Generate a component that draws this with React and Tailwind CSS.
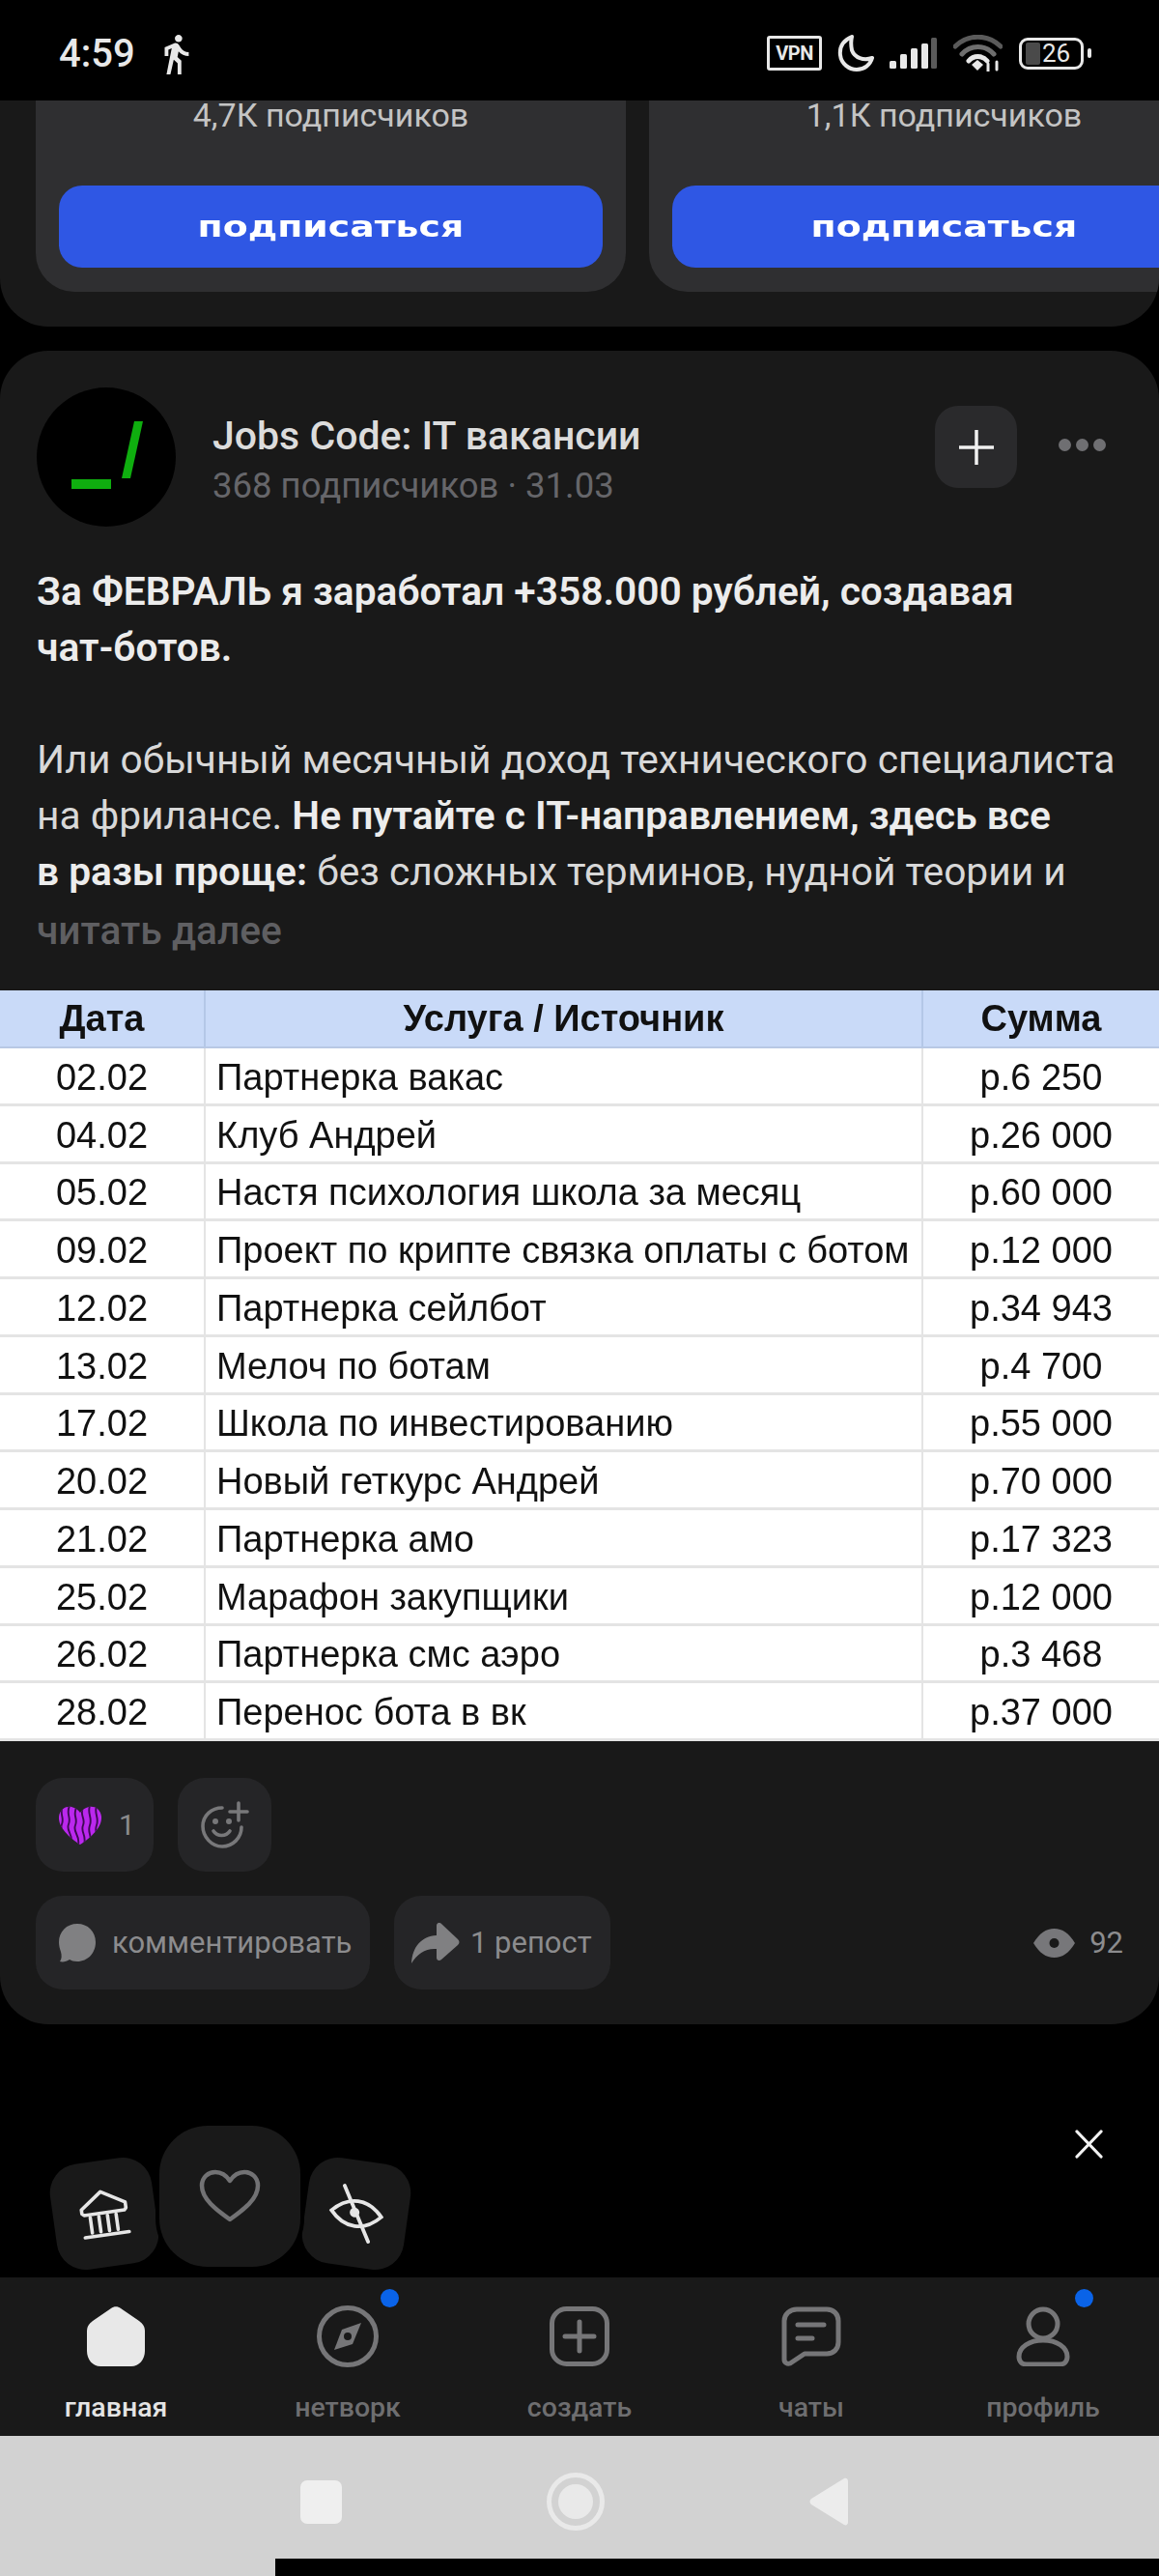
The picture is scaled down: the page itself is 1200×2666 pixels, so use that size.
import React from "react";
import { MdDirectionsWalk } from "react-icons/md";

const rows = [
  ["02.02", "Партнерка вакас", "р.6 250"],
  ["04.02", "Клуб Андрей", "р.26 000"],
  ["05.02", "Настя психология школа за месяц", "р.60 000"],
  ["09.02", "Проект по крипте связка оплаты с ботом", "р.12 000"],
  ["12.02", "Партнерка сейлбот", "р.34 943"],
  ["13.02", "Мелоч по ботам", "р.4 700"],
  ["17.02", "Школа по инвестированию", "р.55 000"],
  ["20.02", "Новый геткурс Андрей", "р.70 000"],
  ["21.02", "Партнерка амо", "р.17 323"],
  ["25.02", "Марафон закупщики", "р.12 000"],
  ["26.02", "Партнерка смс аэро", "р.3 468"],
  ["28.02", "Перенос бота в вк", "р.37 000"],
];

function StatusBar() {
  return (
    <div className="relative z-10 h-[104px] shrink-0 bg-black pt-[8px] pl-[61px] pr-[70px] flex items-center justify-between text-[#e8e8e8]">
      <div className="flex items-center">
        <span className="text-[40px] font-medium leading-[48px]">4:59</span>
        <MdDirectionsWalk className="w-[46px] h-[46px] ml-[19px]" />
      </div>
      <div className="flex items-center gap-[16px] -mt-[2px]">
        <div className="w-[57px] h-[36px] border-[3px] border-[#e8e8e8] rounded-[3px] flex items-center justify-center text-[20px] font-bold leading-[24px] tracking-tight">VPN</div>
        <svg width="38" height="38" viewBox="0 0 38 38" fill="none" stroke="#e8e8e8" strokeWidth="4" strokeLinejoin="round">
          <path d="M15 2C6 6 2 13 3 21c1 9 9 15 17 15 8 0 14-5 16-12-9 3-18 0-21-8-1-5-1-10 0-14z" />
        </svg>
        <svg width="50" height="32" viewBox="0 0 50 32">
          <rect x="0" y="24" width="7" height="8" rx="1.5" fill="#e8e8e8" />
          <rect x="11" y="17" width="7" height="15" rx="1.5" fill="#e8e8e8" />
          <rect x="22" y="11" width="7" height="21" rx="1.5" fill="#e8e8e8" />
          <rect x="33" y="6" width="7" height="26" rx="1.5" fill="#e8e8e8" />
          <rect x="43" y="0" width="6" height="32" rx="1.5" fill="#5a5a5a" />
        </svg>
        <svg width="51" height="38" viewBox="0 0 51 38" fill="none" strokeLinecap="round">
          <path d="M2 12C15 -1 36 -1 49 12" stroke="#5a5a5a" strokeWidth="5" />
          <path d="M9 20C18 10 33 10 42 20" stroke="#6e6e6e" strokeWidth="5" />
          <path d="M16 27C21 21 30 21 35 27" stroke="#e8e8e8" strokeWidth="5" />
          <path d="M19 31l6-5 6 5-6 6z" fill="#e8e8e8" />
          <path d="M36 30v8M45 28v8" stroke="#e8e8e8" strokeWidth="3" />
        </svg>
        <div className="flex items-center gap-[4px] ml-[1px]">
          <div className="w-[67px] h-[33px] border-[3px] border-[#e8e8e8] rounded-[9px] flex items-center relative">
            <div className="w-[15px] h-[23px] ml-[4px] rounded-[2px] bg-[#4a4a4a]" />
            <span className="ml-[2px] text-[26px] leading-[27px]">26</span>
          </div>
          <div className="w-[4px] h-[10px] rounded-full bg-[#e8e8e8]" />
        </div>
      </div>
    </div>
  );
}

function SuggestCard({ subs }) {
  return (
    <div className="w-[611px] shrink-0 h-[218px] rounded-b-[40px] bg-[#2f2f31] px-[24px] pb-[25px] pt-[15px] flex flex-col justify-between">
      <div className="text-center text-[34px] leading-[40px] text-[#c4c4c4]">{subs} подписчиков</div>
      <div className="h-[85px] rounded-[24px] bg-[#2f57e4] flex items-center justify-center text-white">
        <span className="inline-block scale-x-[1.26] text-[30px] leading-[36px] font-bold [font-family:'DejaVu_Sans',sans-serif]">подписаться</span>
      </div>
    </div>
  );
}

function Avatar() {
  return (
    <div className="w-[144px] h-[144px] rounded-full bg-black shrink-0">
      <svg width="144" height="144" viewBox="0 0 144 144">
        <polygon points="101,35 110,35 97,94 88,94" fill="#0fae0f" />
        <rect x="36" y="95" width="41" height="10" fill="#0fae0f" />
      </svg>
    </div>
  );
}

function Header() {
  return (
    <div className="flex items-start pl-[38px] pr-[55px]">
      <Avatar />
      <div className="ml-[38px] flex-1 pt-[28px]">
        <div className="text-[41px] leading-[44px] font-medium text-[#dcdcdc]">Jobs Code: IT вакансии</div>
        <div className="text-[36.5px] leading-[42px] mt-[9px] text-[#66666a]">368 подписчиков · 31.03</div>
      </div>
      <div className="mt-[19px] w-[85px] h-[85px] rounded-[24px] bg-[#2a2a2c] flex items-center justify-center">
        <svg width="36" height="36" viewBox="0 0 36 36" stroke="#f0f0f0" strokeWidth="3.5"><path d="M18 0v36M0 18h36" /></svg>
      </div>
      <div className="ml-[43px] mt-[53px] flex gap-[5px]">
        <i className="block w-[13px] h-[13px] rounded-full bg-[#6f6f72]" />
        <i className="block w-[13px] h-[13px] rounded-full bg-[#6f6f72]" />
        <i className="block w-[13px] h-[13px] rounded-full bg-[#6f6f72]" />
      </div>
    </div>
  );
}

function Table() {
  return (
    <div className="mt-[33px] bg-white [font-family:'Liberation_Sans',sans-serif] text-[#111] text-[38px] blur-[0.4px]">
      <div className="grid grid-cols-[213px_743px_244px] h-[60px] bg-[#c9daf8] font-bold border-b-[2px] border-[#b8c8e4] leading-[44px] items-stretch">
        <div className="flex items-center justify-center border-r-[2px] border-[#b4c7e7]">Дата</div>
        <div className="flex items-center justify-center border-r-[2px] border-[#b4c7e7]">Услуга / Источник</div>
        <div className="flex items-center justify-center">Сумма</div>
      </div>
      <div className="h-[717px] flex flex-col">
        {rows.map((r, i) => (
          <div key={i} className="flex-1 grid grid-cols-[213px_743px_244px] border-b-[3px] border-[#e4e4e4] leading-[44px]">
            <div className="flex items-center justify-center pt-[3px] border-r-[2px] border-[#e4e4e4]">{r[0]}</div>
            <div className="flex items-center pt-[3px] pl-[11px] border-r-[2px] border-[#e4e4e4] whitespace-nowrap">{r[1]}</div>
            <div className="flex items-center justify-center pt-[3px]">{r[2]}</div>
          </div>
        ))}
      </div>
    </div>
  );
}

function ZebraHeart() {
  return (
    <svg width="46" height="40" viewBox="0 0 46 40">
      <defs>
        <clipPath id="zebra"><path d="M23 40C12 33 0 22 1 11 2 3 9 0 14 1c4 1 7 3 9 6 2-3 5-5 9-6 6-1 12 2 13 10 1 11-11 22-22 29z" /></clipPath>
      </defs>
      <g clipPath="url(#zebra)">
        <rect width="46" height="40" fill="#bb28ee" />
        <g fill="none" stroke="#3d0a52" strokeWidth="1.9">
          <path d="M5 0C1 8 7 12 4 19s5 10 3 21" />
          <path d="M12 0C8 8 14 12 11 19s5 10 3 21" />
          <path d="M19 2c-4 8 2 11-1 18s5 10 3 20" />
          <path d="M26 2c-4 8 3 11 0 18s4 10 1 20" />
          <path d="M33 0c-3 8 3 12 0 20s3 10 0 20" />
          <path d="M40 0c-3 8 3 12 0 20s3 10-1 20" />
        </g>
      </g>
    </svg>
  );
}

function Actions() {
  return (
    <div className="mt-[38px] px-[37px] pb-[36px] text-[#8c8c8e]">
      <div className="flex gap-[25px]">
        <div className="w-[122px] h-[97px] rounded-[28px] bg-[#252527] flex items-center pl-[23px] gap-[17px]">
          <ZebraHeart />
          <span className="text-[30px] leading-[36px]">1</span>
        </div>
        <div className="w-[97px] h-[97px] rounded-[28px] bg-[#252527] flex items-center justify-center">
          <svg width="50" height="50" viewBox="0 0 50 50" fill="none" stroke="#78787a" strokeWidth="3.6" strokeLinecap="round">
            <path d="M22 7C11 7 2 15 2 26s9 21 20 21 20-9 20-20" />
            <path d="M13 31c4 6 13 6 17 0" />
            <circle cx="15" cy="21" r="1.2" fill="#78787a" />
            <circle cx="29" cy="21" r="1.2" fill="#78787a" />
            <path d="M39 2v18M30 11h18" />
          </svg>
        </div>
      </div>
      <div className="mt-[25px] flex items-center">
        <div className="w-[346px] h-[97px] rounded-[28px] bg-[#252527] flex items-center pl-[24px] gap-[17px]">
          <svg width="38" height="40" viewBox="0 0 38 40"><path d="M19 0c11 0 19 8 19 19s-8 20-19 20c-4 0-6-1-8-2-3 2-7 3-10 2 2-3 2-6 1-10C1 26 0 23 0 19 0 8 8 0 19 0z" fill="#808082" /></svg>
          <span className="text-[31px] leading-[38px]">комментировать</span>
        </div>
        <div className="ml-[25px] w-[224px] h-[97px] rounded-[28px] bg-[#252527] flex items-center pl-[18px] gap-[11px]">
          <svg width="50" height="42" viewBox="0 0 50 42"><path d="M0 42C1 25 10 14 26 13V3c0-3 3-4 5-2l17 16c2 2 2 4 0 6L31 38c-2 2-5 1-5-2V27C15 26 6 32 0 42z" fill="#808082" /></svg>
          <span className="text-[31px] leading-[38px]">1 репост</span>
        </div>
        <div className="ml-auto flex items-center gap-[15px]">
          <svg width="43" height="30" viewBox="0 0 43 30"><path d="M0 15C6 5 13 0 21.5 0S37 5 43 15c-6 10-13 15-21.5 15S6 25 0 15z" fill="#77777a" /><circle cx="21.5" cy="15" r="5" fill="#191919" /></svg>
          <span className="text-[31px] leading-[36px]">92</span>
        </div>
      </div>
    </div>
  );
}

function Overlay() {
  return (
    <>
      <div className="absolute left-[55px] top-[141px] w-[106px] h-[110px] rounded-[30px] bg-[#191919] -rotate-[8deg] flex items-center justify-center">
        <svg width="52" height="56" viewBox="0 0 52 56" fill="none" stroke="#e6e6e6" strokeWidth="3.6" strokeLinejoin="round" strokeLinecap="round">
          <path d="M3 21L25 5l24 14v6l-2 2H5l-2-2z" />
          <path d="M11 30v16M20 30v16M29 30v16M38 30v16M3 50h46" />
        </svg>
      </div>
      <div className="absolute left-[316px] top-[141px] w-[106px] h-[110px] rounded-[30px] bg-[#191919] rotate-[8deg] flex items-center justify-center">
        <svg width="58" height="60" viewBox="0 0 58 60" fill="none" stroke="#e6e6e6" strokeWidth="3.8" strokeLinecap="round">
          <path d="M3 30C12 20 20 17 29 17s17 3 26 13C46 40 38 43 29 43S12 40 3 30z" />
          <path d="M13 3l32 54" />
          <circle cx="27" cy="29" r="5" fill="#e6e6e6" stroke="none" />
        </svg>
      </div>
      <div className="absolute left-[165px] top-[105px] z-10 w-[146px] h-[146px] rounded-[50px] bg-[#191919] ring-[4px] ring-black flex items-center justify-center">
        <svg width="64" height="56" viewBox="0 0 64 56" fill="none" stroke="#727274" strokeWidth="4.5" strokeLinejoin="round">
          <path d="M32 52C18 42 3 31 3 17 3 8 10 3 17 3c6 0 11 3 15 9 4-6 9-9 15-9 7 0 14 5 14 14 0 14-15 25-29 35z" />
        </svg>
      </div>
      <svg className="absolute left-[1113px] top-[109px]" width="29" height="30" viewBox="0 0 29 30" stroke="#f2f2f2" strokeWidth="3.2" strokeLinecap="round">
        <path d="M2 2l25 26M27 2L2 28" />
      </svg>
    </>
  );
}

const NAV = "#767678";

function Nav() {
  const items = [
    {
      label: "главная", active: true,
      icon: <svg width="60" height="62" viewBox="0 0 60 62"><path d="M25 2c3-2.5 7-2.5 10 0l19 13c4 3 6 6 6 11v20c0 9-6 16-14 16H14C6 62 0 55 0 46V26c0-5 2-8 6-11z" fill="#e8e8e8" /></svg>,
    },
    {
      label: "нетворк", dot: true,
      icon: <svg width="64" height="64" viewBox="0 0 64 64" fill="none"><circle cx="32" cy="32" r="29.5" stroke={NAV} strokeWidth="5" /><path d="M46 18L37 40 18 46l8-21z" fill={NAV} /><circle cx="32" cy="32" r="4" fill="#191919" /></svg>,
    },
    {
      label: "создать",
      icon: <svg width="62" height="62" viewBox="0 0 62 62" fill="none" stroke={NAV} strokeWidth="5" strokeLinecap="round"><rect x="2.5" y="2.5" width="57" height="57" rx="15" /><path d="M31 16v30M16 31h30" /></svg>,
    },
    {
      label: "чаты",
      icon: <svg width="62" height="62" viewBox="0 0 62 62" fill="none" stroke={NAV} strokeWidth="5" strokeLinecap="round" strokeLinejoin="round"><path d="M16 3h31c7 0 12 5 12 12v22c0 7-5 12-12 12H24L9 59c-3 1-6-1-6-4V15C3 8 9 3 16 3z" /><path d="M17 19h27M17 33h15" /></svg>,
    },
    {
      label: "профиль", dot: true,
      icon: <svg width="56" height="62" viewBox="0 0 56 62" fill="none" stroke={NAV} strokeWidth="5"><circle cx="28" cy="18" r="15" /><path d="M28 35c-14 0-25 7-25 17 0 5 3 8 8 8h34c5 0 8-3 8-8 0-10-11-17-25-17z" /></svg>,
    },
  ];
  return (
    <div className="h-[164px] shrink-0 bg-[#191919] grid grid-cols-5 pt-[29px]">
      {items.map((it) => (
        <div key={it.label} className="flex flex-col items-center">
          <div className="relative h-[64px] flex items-center justify-center">
            {it.icon}
            {it.dot && <i className={`absolute -top-[17px] block w-[19px] h-[19px] rounded-full bg-[#0a63e8] ${it.label === "профиль" ? "-right-[24px]" : "-right-[21px]"}`} />}
          </div>
          <div className={`mt-[26px] text-[28.5px] leading-[32px] font-medium ${it.active ? "text-[#e4e4e4]" : "text-[#6e6e70]"}`}>{it.label}</div>
        </div>
      ))}
    </div>
  );
}

function SystemNav() {
  return (
    <div className="h-[145px] shrink-0 bg-[#d2d2d2] relative">
      <div className="h-[136px] flex items-center">
        <div className="ml-[311px] w-[43px] h-[45px] rounded-[7px] bg-[#efefef]" />
        <div className="ml-[212px] w-[60px] h-[60px] rounded-full border-[5px] border-[#e9e9e9] flex items-center justify-center">
          <div className="w-[36px] h-[36px] rounded-full bg-[#e9e9e9]" />
        </div>
        <svg className="ml-[212px]" width="40" height="50" viewBox="0 0 40 50"><path d="M36 1c2-1 4 0 4 3v42c0 3-2 4-4 3L2 28c-2-2-2-4 0-6z" fill="#ececec" /></svg>
      </div>
      <div className="absolute left-[285px] right-0 bottom-0 h-[18px] bg-black" />
    </div>
  );
}

export default function App() {
  return (
    <div className="w-[1200px] h-[2666px] overflow-hidden bg-black flex flex-col [font-family:Roboto,sans-serif]">
      <StatusBar />
      <div className="-mt-[20px] h-[254px] shrink-0 bg-[#191919] rounded-b-[50px] overflow-hidden pl-[37px] flex gap-[24px]">
        <SuggestCard subs="4,7К" />
        <SuggestCard subs="1,1К" />
      </div>
      <div className="mt-[25px] shrink-0 bg-[#191919] rounded-[50px] pt-[38px]">
        <Header />
        <div className="mt-[38px] px-[38px] text-[40.7px] leading-[58px] text-[#d8d8d8] whitespace-nowrap">
          <p className="font-semibold text-[#ececec]">За ФЕВРАЛЬ я заработал +358.000 рублей, создавая</p>
          <p className="font-semibold text-[#ececec]">чат-ботов.</p>
          <p className="mt-[58px]">Или обычный месячный доход технического специалиста</p>
          <p><b className="font-normal">на фрилансе.</b> <b className="font-semibold text-[#ececec]">Не путайте с IT-направлением, здесь все</b></p>
          <p><b className="font-semibold text-[#ececec]">в разы проще:</b> без сложных терминов, нудной теории и</p>
          <p className="mt-[3px] font-medium text-[#5f5f62]">читать далее</p>
        </div>
        <Table />
        <Actions />
      </div>
      <div className="flex-1 relative">
        <Overlay />
      </div>
      <Nav />
      <SystemNav />
    </div>
  );
}
